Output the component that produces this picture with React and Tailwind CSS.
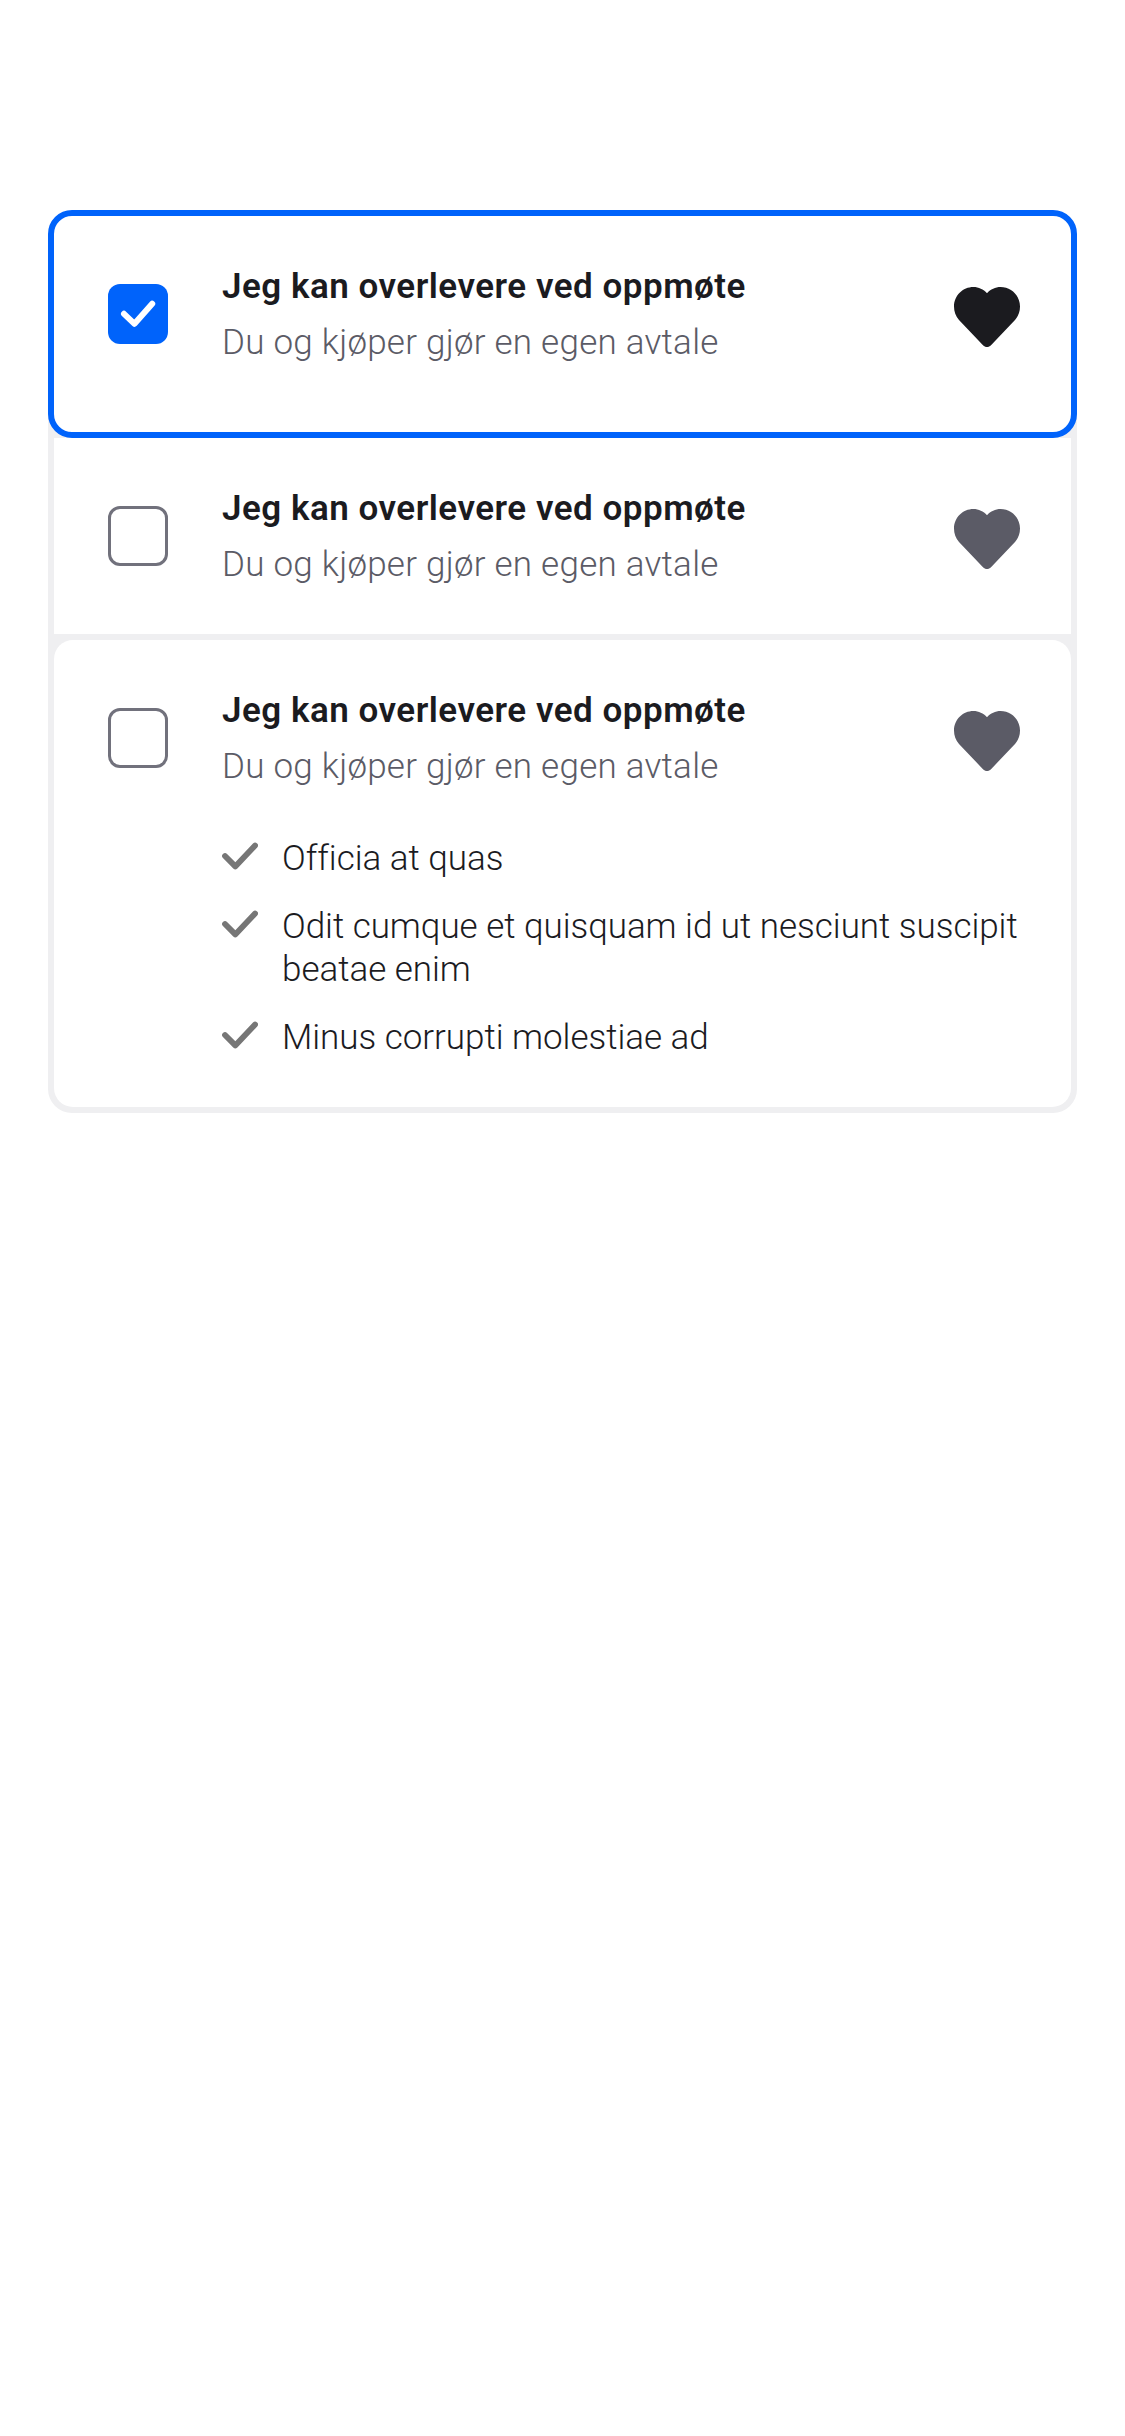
const ITEMS = [
  { id: "first", selected: true },
  { id: "second" },
  {
    id: "third",
    details: [
      "Officia at quas",
      "Odit cumque et quisquam id ut nesciunt suscipit beatae enim",
      "Minus corrupti molestiae ad",
    ],
  },
];

const FRAMES = {
  first: "relative h-[228px] rounded-[24px] border-6 border-[#0063fb]",
  second: "mx-1.5 h-[196px]",
  third: "mx-1.5 mt-1.5 h-[467px] rounded-[19px]",
};

function Checkbox({ checked }) {
  if (!checked) {
    return <span className="mt-[68px] size-15 shrink-0 rounded-[12px] border-3 border-[#71717c]" />;
  }
  return (
    <span className="mt-[68px] size-15 shrink-0 rounded-[12px] bg-[#0063fb]">
      <svg viewBox="0 0 60 60" fill="none" className="size-15">
        <path d="M16 29.800 26.500 39.800 44.200 19.800" stroke="#fff" strokeWidth="6" strokeLinecap="round" strokeLinejoin="round" />
      </svg>
    </span>
  );
}

function Heart({ className }) {
  return (
    <svg viewBox="0 0 66 60" className={className} fill="currentColor">
      <path d="M33 6.200C29.500 2.300 24.500 0 19.500 0 8.700 0 0 8.700 0 19.500 0 24.800 1.700 29.300 5 33L29 58.200C31.300 60.600 34.700 60.600 37 58.200L61 33C64.300 29.300 66 24.800 66 19.500 66 8.700 57.300 0 46.500 0 41.500 0 36.500 2.300 33 6.200Z" />
    </svg>
  );
}

function Tick() {
  return (
    <svg viewBox="0 0 36 28" fill="none" className="mt-[5px] h-7 w-9 shrink-0">
      <path d="M3 14 13.300 24.400 33.100 3.500" stroke="#767676" strokeWidth="5.8" strokeLinecap="round" strokeLinejoin="round" />
    </svg>
  );
}

function Row({ item }) {
  return (
    <section className={`${FRAMES[item.id]} flex bg-white pl-[54px]`}>
      <Checkbox checked={item.selected} />
      <div className="ml-[54px] w-[810px] shrink-0 pt-[49px]">
        <div className="flex justify-between">
          <div className="whitespace-nowrap">
            <h2 className="text-[35px] leading-[44px] font-[560] tracking-[0.5px] text-[#1b1b1f]">Jeg kan overlevere ved oppmøte</h2>
            <p className="mt-3 text-[35px] leading-[44px] font-light tracking-[0.25px] text-[#5b5b66]">Du og kjøper gjør en egen avtale</p>
          </div>
          <Heart className={item.selected ? "mt-[22px] mr-[12px] h-15 w-[66px] text-[#1b1b1f]" : "mt-[22px] mr-[12px] h-15 w-[66px] text-[#5b5b66]"} />
        </div>
        {item.details && (
          <ul className="mt-12 flex flex-col gap-[25px] text-[35px] leading-[43px] font-light tracking-[-0.03px] text-[#1b1b1f] [font-variant-ligatures:none]">
            {item.details.map((text) => (
              <li key={text} className="flex">
                <Tick />
                <span className="ml-6">{text}</span>
              </li>
            ))}
          </ul>
        )}
      </div>
    </section>
  );
}

export default function App() {
  return (
    <main className="min-h-screen bg-white px-12 pt-[210px] font-['Roboto',sans-serif]">
      <div className="rounded-t-[30px] rounded-b-[24px] bg-[#efeff1] pb-1.5">
        {ITEMS.map((item) => (
          <Row key={item.id} item={item} />
        ))}
      </div>
    </main>
  );
}
